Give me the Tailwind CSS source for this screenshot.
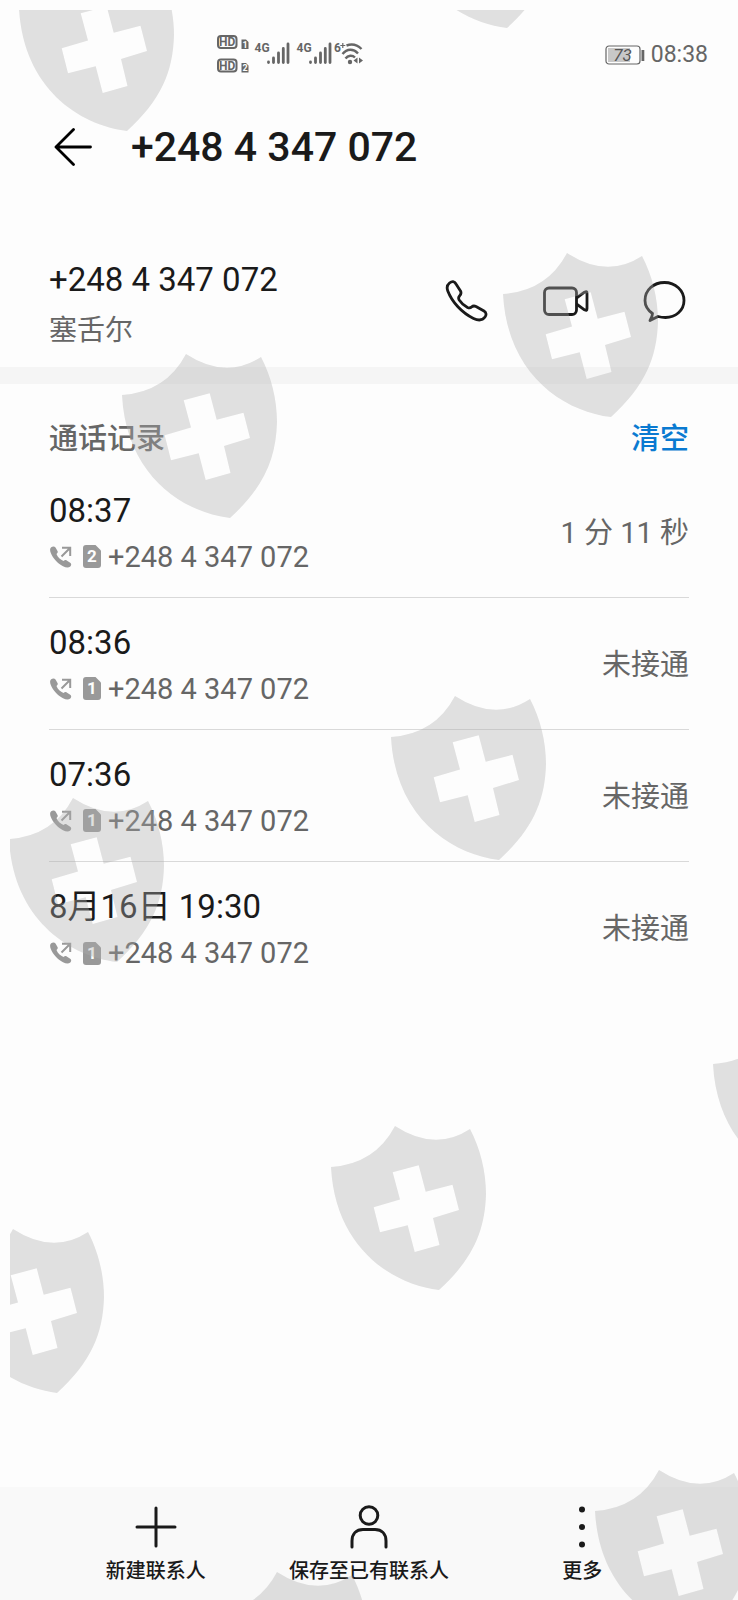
<!DOCTYPE html>
<html lang="zh-CN">
    <head>
        <meta charset="UTF-8" />
        <meta name="viewport" content="width=device-width, initial-scale=1.0" />
        <title>+248 4 347 072</title>
        <script src="https://cdn.jsdelivr.net/npm/@tailwindcss/browser@4"></script>
    </head>

    <body
        class="relative min-h-screen flex flex-col bg-[#fdfdfd] text-[#1a1a1a] font-['Roboto','Noto_Sans_CJK_SC',sans-serif]"
    >
        <!-- Shared icons -->
        <svg class="hidden" aria-hidden="true">
            <symbol id="outgoing" viewBox="0 0 22 22">
                <path d="M1.2 1.2C2.800 .2 4.600 .2 5.500 1.600L7.500 5C8.200 6.200 7.600 7 6.500 8C7.500 11 10.500 13.800 13.500 15C14.700 14 15.600 13.800 16.700 14.500L20.200 16.800C21.500 17.700 21.600 19.400 20.300 20.600C18.500 22 16 21.800 13 20.200C7.500 17.300 3 12.400 .8 7C-.2 4.400 -.2 2.300 1.200 1.200Z" fill="currentColor" />
                <path d="M11.500 10.500L20 2M12 1.700H20.200V10" fill="none" stroke="currentColor" stroke-width="2" />
            </symbol>
            <symbol id="sim" viewBox="0 0 18 23">
                <path d="M3 0H12.500L18 5.500V20A3 3 0 0 1 15 23H3A3 3 0 0 1 0 20V3A3 3 0 0 1 3 0Z" fill="currentColor" />
            </symbol>
            <symbol id="shield" viewBox="0 0 158 165">
                <path
                    fill-rule="evenodd"
                    d="M1 41Q45 38 65 0Q105 26 140 3C150 22 156 45 156 68C155 105 143 133 109 164C60 158 5 120 1 41ZM62.700 46.300L88.700 39.300L95.700 65.700L122.500 58.800L129 84L103 92L109.500 119L84.700 126L77.700 99.300L50 106.300L43.700 81.300L70 73.500Z"
                />
            </symbol>
        </svg>

        <!-- Status bar -->
        <div class="h-[106px] pt-0.5 pl-[216px] pr-[30px] flex items-center justify-between text-[#666]">
            <svg class="w-[150px] h-10" viewBox="0 0 150 40" fill="currentColor" font-family="Liberation Sans Narrow, Roboto, sans-serif" font-weight="bold">
                <g fill="none" stroke="currentColor" stroke-width="2">
                    <rect x="2" y="2" width="18.500" height="12" rx="3" />
                    <rect x="2" y="25.500" width="18.500" height="12" rx="3" />
                </g>
                <text x="11.200" y="12.300" font-size="12" text-anchor="middle" font-family="Roboto, sans-serif">HD</text>
                <text x="11.200" y="35.800" font-size="12" text-anchor="middle" font-family="Roboto, sans-serif">HD</text>
                <path d="M25.500 5.500H30L32.500 8V15H25.500ZM25.500 29H30L32.500 31.500V38.500H25.500Z" />
                <text x="29" y="13.800" font-size="9" text-anchor="middle" fill="#fdfdfd">1</text>
                <text x="29" y="37.300" font-size="9" text-anchor="middle" fill="#fdfdfd">2</text>
                <text x="38.500" y="18" font-size="12">4G</text>
                <text x="80.500" y="18" font-size="12">4G</text>
                <g fill="none" stroke="currentColor" stroke-width="2.800" stroke-linecap="round">
                    <path d="M52.500 28V28.500M57.500 24V28.500M62.500 19V28.500M67.300 14.500V28.500M72 10V28.500" />
                    <path d="M94.500 28V28.500M99.500 24V28.500M104.500 19V28.500M109.300 14.500V28.500M114 10V28.500" />
                </g>
                <text x="118" y="18" font-size="12">6</text>
                <path d="M126.800 9V14M124.300 11.500H129.300" fill="none" stroke="currentColor" stroke-width="1.200" />
                <path d="M130.500 11.500C136 9.500 141.500 11 145.500 15M126.500 20C131 14.500 137.500 14.500 142 19.500M129.500 24.500C132 21 136.500 21 139 23.500" fill="none" stroke="currentColor" stroke-width="2.400" />
                <circle cx="134" cy="28" r="2.200" />
                <path d="M141.500 23.500V29.500L137.500 26.500ZM143 23.500V29.500L147 26.500Z" />
            </svg>
            <div class="pt-0.5 flex items-center gap-1.5">
                <svg class="w-10 h-5" viewBox="0 0 40 20" aria-label="73%">
                    <path d="M3 3H25V17H3Z" fill="#c8c8c8" />
                    <rect x="1" y="1" width="34" height="18" rx="3" fill="none" stroke="#666" stroke-width="1.200" />
                    <rect x="36.500" y="5" width="2.800" height="11" fill="#666" />
                    <text x="17.500" y="15.500" font-size="17" font-style="italic" text-anchor="middle" fill="#555" font-family="Roboto, sans-serif">73</text>
                </svg>
                <time class="text-[23px]">08:38</time>
            </div>
        </div>

        <!-- Title -->
        <header class="h-[82px] pt-px px-[49px] flex items-center gap-8">
            <button aria-label="返回">
                <svg class="w-[50px] h-10" viewBox="0 0 50 40" fill="none" stroke="#000" stroke-width="2.800" stroke-linecap="round" stroke-linejoin="round">
                    <path d="M24.500 1.500L7 19L24.500 36.500M7 19H41.500" />
                </svg>
            </button>
            <h1 class="text-[41px] font-medium">+248 4 347 072</h1>
        </header>

        <!-- Contact -->
        <section class="pl-[49px] pr-[51px] pt-[72px] pb-[16px] flex items-start justify-between">
            <div class="flex flex-col gap-[11px]">
                <p class="text-[33px] leading-10">+248 4 347 072</p>
                <p class="text-[28px] leading-10 text-[#666]">塞舌尔</p>
            </div>
            <div class="h-[82px] flex items-center gap-[54px]">
                <button aria-label="拨打电话">
                    <svg class="w-[44px] h-[44px]" viewBox="0 0 44 44" fill="none" stroke="currentColor" stroke-width="2.800" stroke-linejoin="round">
                        <path d="M4.500 4C7 2 9.500 2 11 5L15.500 12C16.500 14 16 15.500 14.500 17C13.200 18.500 13.300 19.500 14.200 21C16.500 24.500 19.500 27 22.500 28.500C24.500 29.300 25.500 29 26.500 28C28 26.700 29 26.500 31 27.500L39 32C41.500 33.500 41.500 36 40 38C37.500 41.500 34 42 28.500 39.500C17 34 7 23 2.800 12C1.500 8.500 2 6 4.500 4Z" />
                    </svg>
                </button>
                <button aria-label="视频通话">
                    <svg class="w-[46px] h-[44px]" viewBox="0 0 46 44" fill="none" stroke="currentColor" stroke-width="2.800" stroke-linejoin="round">
                        <rect x="1.500" y="9" width="32" height="26.500" rx="4.500" />
                        <path d="M33.500 19L41.500 13.200C43.500 12.200 44 12.600 44 14.500V29.500C44 31.500 43.500 31.800 41.500 30.800L33.500 25" />
                    </svg>
                </button>
                <button aria-label="发送信息">
                    <svg class="w-[44px] h-[44px]" viewBox="0 0 44 44" fill="none" stroke="currentColor" stroke-width="2.800" stroke-linejoin="round">
                        <path d="M9.500 34.500C4.500 31 2 26.500 2 21.500C2 11 10.500 3.500 21.500 3.500C32.500 3.500 41 11.500 41 21.500C41 31.500 32.500 38.500 22.500 38.500C20 38.500 17.500 38.200 15 37.500L7 41.500C8.500 39 9.500 37 9.500 34.500Z" />
                    </svg>
                </button>
            </div>
        </section>

        <div class="h-[17px] bg-[#f5f5f5]"></div>

        <!-- Call log -->
        <main class="px-[49px] pt-[35px]">
            <div class="pb-[7px] flex justify-between text-[29px] leading-10 font-medium">
                <h2 class="text-[#666]">通话记录</h2>
                <button class="text-[#0a7ad1]">清空</button>
            </div>
            <ul class="divide-y divide-[#d9d9d9]">
                <li class="h-[132px] flex items-center justify-between">
                    <div class="flex flex-col gap-[10px]">
                        <time class="text-[33px] leading-10">08:37</time>
                        <div class="flex items-center text-[29px] leading-8 text-[#666]">
                            <svg class="w-6 h-[22px] mr-[10px] text-[#999]"><use href="#outgoing" /></svg>
                            <span class="w-[18px] h-[23px] mr-[7px] relative text-[#999]">
                                <svg class="w-[18px] h-[23px]"><use href="#sim" /></svg>
                                <b class="absolute inset-0 text-center text-[17px] leading-[23px] text-[#fdfdfd]">2</b>
                            </span>
                            +248 4 347 072
                        </div>
                    </div>
                    <p class="pt-1 text-[29px] text-[#666]">1 分 11 秒</p>
                </li>
                <li class="h-[132px] flex items-center justify-between">
                    <div class="flex flex-col gap-[10px]">
                        <time class="text-[33px] leading-10">08:36</time>
                        <div class="flex items-center text-[29px] leading-8 text-[#666]">
                            <svg class="w-6 h-[22px] mr-[10px] text-[#999]"><use href="#outgoing" /></svg>
                            <span class="w-[18px] h-[23px] mr-[7px] relative text-[#999]">
                                <svg class="w-[18px] h-[23px]"><use href="#sim" /></svg>
                                <b class="absolute inset-0 text-center text-[17px] leading-[23px] text-[#fdfdfd]">1</b>
                            </span>
                            +248 4 347 072
                        </div>
                    </div>
                    <p class="pt-1 text-[29px] text-[#666]">未接通</p>
                </li>
                <li class="h-[132px] flex items-center justify-between">
                    <div class="flex flex-col gap-[10px]">
                        <time class="text-[33px] leading-10">07:36</time>
                        <div class="flex items-center text-[29px] leading-8 text-[#666]">
                            <svg class="w-6 h-[22px] mr-[10px] text-[#999]"><use href="#outgoing" /></svg>
                            <span class="w-[18px] h-[23px] mr-[7px] relative text-[#999]">
                                <svg class="w-[18px] h-[23px]"><use href="#sim" /></svg>
                                <b class="absolute inset-0 text-center text-[17px] leading-[23px] text-[#fdfdfd]">1</b>
                            </span>
                            +248 4 347 072
                        </div>
                    </div>
                    <p class="pt-1 text-[29px] text-[#666]">未接通</p>
                </li>
                <li class="h-[132px] flex items-center justify-between">
                    <div class="flex flex-col gap-[10px]">
                        <time class="text-[33px] leading-10">8月16日 19:30</time>
                        <div class="flex items-center text-[29px] leading-8 text-[#666]">
                            <svg class="w-6 h-[22px] mr-[10px] text-[#999]"><use href="#outgoing" /></svg>
                            <span class="w-[18px] h-[23px] mr-[7px] relative text-[#999]">
                                <svg class="w-[18px] h-[23px]"><use href="#sim" /></svg>
                                <b class="absolute inset-0 text-center text-[17px] leading-[23px] text-[#fdfdfd]">1</b>
                            </span>
                            +248 4 347 072
                        </div>
                    </div>
                    <p class="pt-1 text-[29px] text-[#666]">未接通</p>
                </li>
            </ul>
        </main>

        <!-- Bottom actions -->
        <footer class="mt-auto px-[49px] pt-[17px] pb-[15px] grid grid-cols-3 bg-[#f9f9f9] text-[20px] leading-7 font-medium">
            <button class="flex flex-col items-center gap-[7px]">
                <svg class="w-[46px] h-[46px]" viewBox="0 0 46 46" fill="none" stroke="currentColor" stroke-width="3" stroke-linecap="round">
                    <path d="M23 4V42M4 23H42" />
                </svg>
                新建联系人
            </button>
            <button class="flex flex-col items-center gap-[7px]">
                <svg class="w-[46px] h-[46px]" viewBox="0 0 46 46" fill="none" stroke="currentColor" stroke-width="3" stroke-linecap="round">
                    <circle cx="23" cy="11.500" r="8.800" />
                    <path d="M6 43V37C6 29.500 10.500 25.500 17 25.500H29C35.500 25.500 40 29.500 40 37V43" />
                </svg>
                保存至已有联系人
            </button>
            <button class="flex flex-col items-center gap-[7px]">
                <svg class="w-[46px] h-[46px]" viewBox="0 0 46 46" fill="currentColor">
                    <circle cx="23" cy="5.500" r="3" />
                    <circle cx="23" cy="23" r="3" />
                    <circle cx="23" cy="40.500" r="3" />
                </svg>
                更多
            </button>
        </footer>

        <!-- Shield watermark -->
        <div class="absolute top-2.5 left-2.5 right-0 bottom-0 overflow-hidden pointer-events-none">
            <svg class="w-full h-full fill-[#aeaeae]/37" aria-hidden="true">
                <use href="#shield" x="8" y="-43" width="158" height="165" />
                <use href="#shield" x="388" y="-146" width="158" height="165" />
                <use href="#shield" x="492" y="243" width="158" height="165" />
                <use href="#shield" x="111" y="344" width="158" height="165" />
                <use href="#shield" x="380" y="686" width="158" height="165" />
                <use href="#shield" x="-2" y="788" width="158" height="165" />
                <use href="#shield" x="702" y="1013" width="158" height="165" />
                <use href="#shield" x="320" y="1116" width="158" height="165" />
                <use href="#shield" x="-62" y="1219" width="158" height="165" />
                <use href="#shield" x="584" y="1460" width="158" height="165" />
                <use href="#shield" x="202" y="1562" width="158" height="165" />
            </svg>
        </div>
    </body>
</html>
